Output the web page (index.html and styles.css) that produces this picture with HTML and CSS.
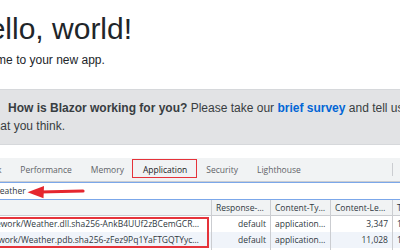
FILE: index.html
```html
<!DOCTYPE html>
<html lang="en">
<head>
  <meta charset="UTF-8" />
  <meta name="viewport" content="width=device-width, initial-scale=1" />
  <title>Weather</title>
  <link rel="stylesheet" href="styles.css">
</head>
<body>

  <main class="content">
    <h1>Hello, world!</h1>
    <p class="lead">Welcome to your new app.</p>

    <div class="alert">
      <span class="pencil">
        <svg width="12" height="12" viewBox="0 0 12 12"><path d="M9 0 L12 3 L4 11 L0 12 L1 8 Z" fill="#383d41"/></svg>
      </span><strong>How is Blazor working for you?</strong>
      Please take our <a class="survey" href="#">brief survey</a> and tell us<br>what you think.
    </div>
  </main>

  <!-- DevTools -->
  <section class="devtools">
    <div class="tabs">
      <span class="tab">Network</span>
      <span class="tab">Performance</span>
      <span class="tab">Memory</span>
      <span class="tab marked">Application</span>
      <span class="tab">Security</span>
      <span class="tab">Lighthouse</span>
      <span class="tab-tools"></span>
    </div>

    <div class="filter">
      <span class="filter-text">Weather</span>
      <svg class="arrow" width="60" height="14" viewBox="0 0 60 14">
        <path d="M14 7 L57 6" stroke="#e5262e" stroke-width="3.2" stroke-linecap="round" fill="none"/>
        <path d="M1.5 7.2 L18 1 L17.5 13.2 Z" fill="#e5262e"/>
      </svg>
    </div>

    <div class="row head">
      <div class="cell"></div>
      <div class="cell">Response-Type</div>
      <div class="cell">Content-Type</div>
      <div class="cell">Content-Length</div>
      <div class="cell">Time Cached</div>
    </div>

    <div class="rows">
      <div class="row">
        <div class="cell name"><span>https://localhost:5001/_framework/Weather.dll.sha256-AnkB4UUf2zBCemGCR…</span></div>
        <div class="cell num">default</div>
        <div class="cell">application/octet-stream</div>
        <div class="cell num">3,347</div>
        <div class="cell">12/3/2020, 10:13:49 AM</div>
      </div>
      <div class="row alt">
        <div class="cell name"><span>https://localhost:5001/_framework/Weather.pdb.sha256-zFez9Pq1YaFTGQTYyc…</span></div>
        <div class="cell num">default</div>
        <div class="cell">application/octet-stream</div>
        <div class="cell num">11,028</div>
        <div class="cell">12/3/2020, 10:13:49 AM</div>
      </div>
      <div class="row">
        <div class="cell"></div>
        <div class="cell"></div>
        <div class="cell"></div>
        <div class="cell"></div>
        <div class="cell"></div>
      </div>
      <div class="mark"></div>
    </div>
  </section>

</body>
</html>
```

FILE: styles.css
```css
html, body {
  margin: 0;
  padding: 0;
}

body {
  width: 400px;
  height: 250px;
  overflow: hidden;
  background: #fff;
  font-family: "Liberation Sans", Arial, sans-serif;
  color: #212529;
}

/* Blazor page */
.content {
  margin: 0 -20px 0 -31px;
  padding-top: 11px;
}

h1 {
  font-size: 30px;
  line-height: 36px;
  font-weight: normal;
  margin: 0 0 4px -2px;
}

.lead {
  font-size: 12px;
  line-height: 18px;
  margin: 0 0 20px -6px;
}

.alert {
  background: #e2e3e5;
  border: 1px solid #d6d8db;
  color: #383d41;
  padding: 9px 15px;
  font-size: 12px;
  line-height: 18px;
  white-space: nowrap;
}

.pencil {
  display: inline-block;
  width: 12px;
  margin-right: 11px;
}

.pencil svg {
  display: block;
}

.survey {
  color: #0366d6;
  font-weight: bold;
  text-decoration: none;
}

/* DevTools */
.devtools {
  margin-top: 13px;
  font-family: "Open Sans", "Noto Sans", sans-serif;
  font-size: 8.5px;
  color: #303942;
}

.tabs {
  display: flex;
  height: 23px;
  background: #f1f3f4;
  border-bottom: 1px solid #cbcdd1;
}

.tab {
  position: relative;
  padding: 0 9.5px;
  line-height: 23px;
  color: #5f6368;
  white-space: nowrap;
  flex-shrink: 0;
}

.tab:first-child {
  margin-left: -42px;
}

.tab.marked {
  color: #202124;
}

.tab.marked::after {
  content: "";
  position: absolute;
  left: -1px;
  right: 0;
  top: 1px;
  bottom: 3px;
  border: 1.5px solid #e5333a;
}

.tab-tools {
  margin: 5px 0 5px auto;
  width: 7px;
  flex-shrink: 0;
  border-left: 1px solid #cbcdd1;
}

.filter {
  position: relative;
  height: 16px;
  line-height: 16px;
  border-top: 1px solid #7ba7ea;
  border-bottom: 1px solid #7ba7ea;
  color: #303942;
  white-space: nowrap;
}

.filter-text {
  margin-left: -8px;
}

.arrow {
  position: absolute;
  left: 26px;
  top: 2px;
}

.row {
  display: grid;
  grid-template-columns: 212px 59px 60px 62px 1fr;
  height: 16px;
  line-height: 16px;
  box-sizing: border-box;
}

.row.head {
  background: #f1f3f4;
  border-bottom: 1px solid #cbcdd1;
  line-height: 15px;
}

.row.alt {
  background: #f0f4fa;
}

.cell {
  border-right: 1px solid #cbcdd1;
  padding: 0 4px;
  overflow: hidden;
  white-space: nowrap;
  text-overflow: ellipsis;
}

.cell.num {
  text-align: right;
}

.cell.name {
  display: flex;
  justify-content: flex-end;
  padding-right: 12px;
}

.cell.name span {
  flex-shrink: 0;
}

.rows {
  position: relative;
}

.mark {
  position: absolute;
  left: -4px;
  top: 1px;
  width: 213px;
  height: 31px;
  border: 2px solid #e5333a;
  box-sizing: border-box;
}
```
